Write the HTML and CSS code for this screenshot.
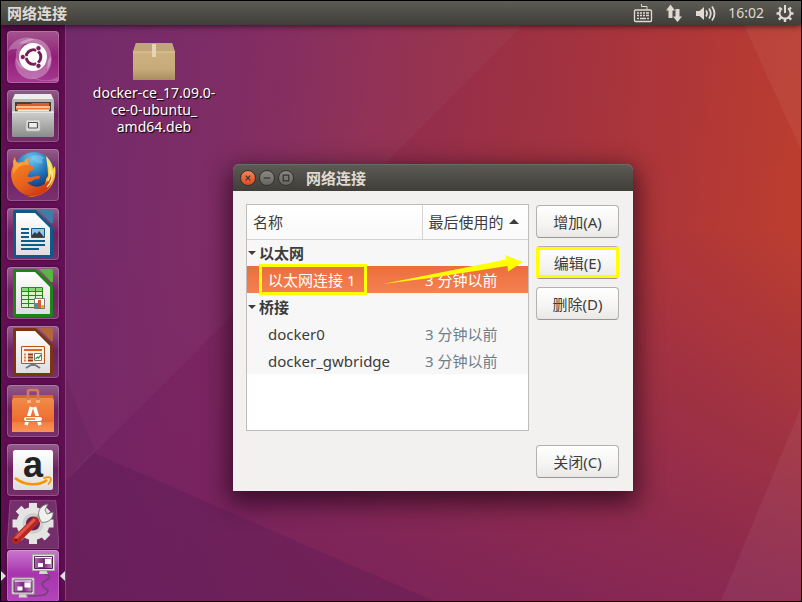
FILE: index.html
```html
<!DOCTYPE html>
<html lang="zh-CN">
<head>
<meta charset="utf-8">
<title>网络连接</title>
<link rel="stylesheet" href="styles.css">
</head>
<body>
<div class="screen">
  <header class="panel">
    <span class="panel-title">网络连接</span>
    <div class="indicators">
      <button class="indicator" aria-label="键盘">
        <svg width="20" height="20" viewBox="0 0 20 20" fill="none" stroke="#dfdbd2">
          <path d="M8.500 1v2.500h5.500v3"/>
          <rect x="1.500" y="7" width="17" height="11.500" rx="1" stroke-width="1.300"/>
          <path d="M4 10h2m1 0h2m1 0h2m1 0h3M4 12.500h2m1 0h2m1 0h2m1 0h3M4 15.500h2m1 0h6m1 0h2" stroke-width="1.700"/>
        </svg>
      </button>
      <button class="indicator" aria-label="网络">
        <svg width="20" height="20" viewBox="0 0 20 20" fill="#dfdbd2">
          <path d="M6.500 1.500 11 7.500H8.500V15h-4V7.500H2z"/>
          <path d="M13.500 19 9 13.500h2.500V6h4v7.500H18z"/>
        </svg>
      </button>
      <button class="indicator" aria-label="音量">
        <svg width="22" height="20" viewBox="0 0 22 20" fill="none" stroke="#dfdbd2" stroke-width="1.800">
          <path d="M1 8h3.500L9 4v13l-4.500-4H1z" fill="#dfdbd2" stroke="none"/>
          <path d="M11 7.500q2 3 0 6M14 5.500q3.500 5 0 10M17 3.500q5 7 0 14"/>
        </svg>
      </button>
      <button class="indicator clock">16:02</button>
      <button class="indicator" aria-label="系统">
        <svg width="20" height="20" viewBox="0 0 20 20" fill="none" stroke="#dfdbd2">
          <path d="M7 5.500a5.500 5.500 0 1 0 6 0" stroke-width="2"/>
          <path d="M10 2v8" stroke-width="2"/>
          <path d="M10 16v3M4.500 10.500h-3M18.500 10.500h-3M6 14.500l-2.200 2.200M14 14.500l2.200 2.200M5.500 6 4 4.500M14.500 6 16 4.500" stroke-width="2.400"/>
        </svg>
      </button>
    </div>
  </header>

  <div class="workspace">
    <svg class="wallpaper" viewBox="65 25 736 576" preserveAspectRatio="none" aria-hidden="true">
      <path d="M65 25H523L384 165 230 318 65 482z" fill="#fff" opacity=".03"/>
      <path d="M65 375 94 449 65 482z" fill="#501a48" opacity=".15"/>
      <path d="M65 482 94 453 434 601H65z" fill="#4e1a50" opacity=".28"/>
      <path d="M744 25H801V150z" fill="#fff" opacity=".05"/>
      <path d="M801 407V601H721z" fill="#fff" opacity=".05"/>
    </svg>

    <nav class="launcher" aria-label="启动器">
      <a class="tile tile-dash" href="#" aria-label="搜索">
        <svg viewBox="0 0 52 52">
          <g fill="#fff">
            <path d="M12 13C20 5 37 5 43 19c3 9 1 15-3 20 4-16-8-29-28-26z" opacity=".32"/>
            <path d="M44 25c3 13-8 25-22 23C12 46 6 36 9 26c5 14 22 19 35-1z" opacity=".3"/>
            <path d="M1 20C5 8 20 3 28 9 12 10 9 24 17 39 8 34 8 25 10 18c-3 0-6 0-9 2z" opacity=".25"/>
            <path d="M24 45c10 6 20 5 27 1v4H38c-6 0-11-2-14-5z" opacity=".2"/>
          </g>
          <circle cx="26" cy="26" r="14" fill="#fff"/>
          <circle cx="26.500" cy="26" r="7.300" fill="none" stroke="#761e56" stroke-width="3"/>
          <path d="M26.500 26H15M26.500 26l6-10M26.500 26l6 10" stroke="#fff" stroke-width="1.600"/>
          <circle cx="26.500" cy="26" r="5.600" fill="#fff"/>
          <g fill="#761e56" stroke="#fff" stroke-width=".8"><circle cx="15.800" cy="26" r="2.600"/><circle cx="31.500" cy="17.200" r="2.600"/><circle cx="31.500" cy="34.800" r="2.600"/></g>
        </svg>
      </a>
      <a class="tile" href="#" aria-label="文件">
        <svg viewBox="0 0 52 52">
          <defs><linearGradient id="steel" x2="0" y2="1"><stop stop-color="#d0d0ce"/><stop offset="1" stop-color="#8c8c8a"/></linearGradient></defs>
          <path d="M8 4h36l3 6v34H5V10z" fill="#b9b9b6"/>
          <path d="M8 4h36l2 5H6z" fill="#ededeb"/>
          <path d="M8 12h36v10H8z" fill="#45403b"/>
          <path d="M10 14h14l1-1h17v9H10z" fill="#d9602c"/>
          <path d="M9 16h34v2H9z" fill="#f8c08c"/><path d="M9 18h34v2H9z" fill="#ef7a35"/><path d="M11 19.500h31v1.500H11z" fill="#f6e6d6"/>
          <path d="M5 21.500h42V46l-1 1H6l-1-1z" fill="url(#steel)"/>
          <path d="M5 21.500h42v1.200H5z" fill="#ecece9"/>
          <rect x="19" y="30" width="14" height="11" rx="1.500" fill="#dededc" stroke="#b9b9b7" stroke-width=".7"/>
          <rect x="21.500" y="32.500" width="9" height="5.500" rx=".8" fill="#eee" stroke="#50504e" stroke-width="1.200"/>
        </svg>
      </a>
      <a class="tile" href="#" aria-label="Firefox">
        <svg viewBox="0 0 52 52">
          <defs>
            <radialGradient id="globe" cx=".45" cy=".18" r=".8"><stop stop-color="#6fc7ee"/><stop offset=".5" stop-color="#2474b8"/><stop offset="1" stop-color="#132d66"/></radialGradient>
            <linearGradient id="fox" x1=".1" y1="0" x2=".75" y2="1"><stop stop-color="#f58a22"/><stop offset=".6" stop-color="#e8601e"/><stop offset="1" stop-color="#c93314"/></linearGradient>
            <linearGradient id="tail" x2="0" y2="1"><stop stop-color="#fdf07a"/><stop offset=".5" stop-color="#f9c52b"/><stop offset="1" stop-color="#e8601e"/></linearGradient>
          </defs>
          <circle cx="27" cy="23" r="20" fill="url(#globe)"/>
          <path d="M24 8c5-3 12-2 14 2-3-1-4 1-2 4-5 2-9-3-12-6z" fill="#8fd5f2" opacity=".45"/>
          <path d="M39 7c4 4 7 9 7 13l2-3c2 11-2 21-10 26-8 6-18 5-18 5 13-3 19-11 19-18l2-3c0-7-1-13-2-20z" fill="url(#tail)"/>
          <path d="M8 8c0 3 1 5 3 6 2-1 5-1 6-1 1-2 3-4 5-4-1 3-1 5 0 7l5 2c1 2-2 3-5 5 0 3-2 4-2 4 5 3 8-1 12 0 2 1 1 3-2 3-4 0-5 4-10 3 5 6 13 6 19 1 3-3 4-7 4-11 3 5 2 13-3 18C32 49 18 49 10 40 3 33 3 22 6 17c0-3 0-6 2-9z" fill="url(#fox)"/>
          <path d="M8 8c0 3 1 5 3 6 2-1 5-1 6-1 1-2 3-4 5-4-1 3-1 5 0 7-6-1-12 1-16 10 0-4 0-7 1-9-1-3-1-6 1-9z" fill="#f7a03a"/>
          <path d="M42 15c2 6 2 12-1 17M45 22c1 6-1 12-5 16" fill="none" stroke="#fff2a0" stroke-width="1.300"/>
        </svg>
      </a>
      <a class="tile" href="#" aria-label="LibreOffice Writer">
        <svg viewBox="0 0 52 52">
          <defs><linearGradient id="paper" x2="0" y2="1"><stop stop-color="#fff"/><stop offset="1" stop-color="#dedede"/></linearGradient></defs>
          <path d="M8 2h21l17 17v29q0 2-2 2H8q-2 0-2-2V4q0-2 2-2z" fill="#0f5b86"/>
          <path d="M32 2h12q2 0 2 2v11h-2z" fill="#3d7ea9"/>
          <path d="M9 5h19l15 15v27H9z" fill="url(#paper)"/>
          <path d="M14 21h8M14 25h8M14 29h8M14 33h24M14 37h24M14 41h18" stroke="#115d88" stroke-width="2"/>
          <path d="M24.500 20.500h13v9h-13z" fill="#8bc7ea" stroke="#115d88"/>
          <path d="M25 29v-2l3-3 2 2 2-3 5 6z" fill="#363b3f"/><circle cx="35.500" cy="22.500" r="1.300" fill="#f4c63c"/>
        </svg>
      </a>
      <a class="tile" href="#" aria-label="LibreOffice Calc">
        <svg viewBox="0 0 52 52">
          <path d="M8 2h21l17 17v29q0 2-2 2H8q-2 0-2-2V4q0-2 2-2z" fill="#1d8511"/>
          <path d="M32 2h12q2 0 2 2v11h-2z" fill="#57b83f"/>
          <path d="M9 5h19l15 15v27H9z" fill="url(#paper)"/>
          <path d="M14.500 20.500h21v20h-21z" fill="#d9f5cd"/><path d="M15 21h20v3H15z" fill="#8cd878"/>
          <path d="M14.500 20.500h21v20h-21zM14.500 24.500h21M14.500 28.500h21M14.500 32.500h21M14.500 36.500h21M21.500 20.500v20M28.500 20.500v20" fill="none" stroke="#238b16"/>
          <path d="M27.500 31.500h10v10h-10z" fill="#fff" stroke="#777"/>
          <path d="M28 36h3v5h-3z" fill="#2f93d5"/><path d="M31 33h3v8h-3z" fill="#dc5b23"/><path d="M34 38h3v3h-3z" fill="#e8b220"/>
        </svg>
      </a>
      <a class="tile" href="#" aria-label="LibreOffice Impress">
        <svg viewBox="0 0 52 52">
          <path d="M8 2h21l17 17v29q0 2-2 2H8q-2 0-2-2V4q0-2 2-2z" fill="#7d3410"/>
          <path d="M32 2h12q2 0 2 2v11h-2z" fill="#b3663c"/>
          <path d="M9 5h19l15 15v27H9z" fill="url(#paper)"/>
          <path d="M19 42l5-3h4l5 3" fill="none" stroke="#777" stroke-width="2"/>
          <path d="M14.500 20.500h23v17h-23z" fill="#fff0e4" stroke="#b9531c"/>
          <path d="M17 24h18" stroke="#d96a24" stroke-width="2"/>
          <path d="M17 28.500h2M17 31.500h2M17 34.500h2" stroke="#dd8048" stroke-width="2"/>
          <path d="M21 28.500h5M21 31.500h5M21 34.500h5" stroke="#8f3a10" stroke-width="2"/>
          <path d="M27.500 27.500h7v7h-7z" fill="#fff" stroke="#777"/><path d="M28.500 33l2-2 1 1 2.500-3" fill="none" stroke="#289a35" stroke-width="1.200"/>
        </svg>
      </a>
      <a class="tile" href="#" aria-label="软件中心">
        <svg viewBox="0 0 52 52">
          <defs><linearGradient id="bag" x2="0" y2="1"><stop stop-color="#f08b49"/><stop offset=".7" stop-color="#ee6c2e"/><stop offset="1" stop-color="#f58d52"/></linearGradient></defs>
          <path d="M6 10h40l1 5H5z" fill="#d9642e"/>
          <path d="M5 15l2-2h38l2 2v32H5z" fill="url(#bag)"/>
          <path d="M21 17V7q0-2 2-2h6q2 0 2 2v10" fill="none" stroke="#d77958" stroke-width="2.600"/>
          <path d="M20 15h4v3h-4zM29 15h4v3h-4z" fill="#ffb17f"/>
          <path d="M5 37h42v10H5z" fill="#ffa164" opacity=".35"/>
          <g stroke="#fff" stroke-width="3.600"><line x1="24.500" y1="22" x2="19" y2="40"/><line x1="27.500" y1="22" x2="33" y2="40"/></g>
          <rect x="16" y="31" width="20" height="6" fill="#ee6c2e"/>
          <rect x="17" y="32" width="18" height="4" rx="2" fill="#fff"/><path d="M19 34h9" stroke="#ee6c2e" stroke-width="1.500"/>
        </svg>
      </a>
      <a class="tile" href="#" aria-label="Amazon">
        <svg viewBox="0 0 52 52">
          <rect x="6" y="6" width="40" height="40" rx="2.500" fill="url(#paper)"/>
          <text class="amazon-letter" x="26" y="33" text-anchor="middle">a</text>
          <path d="M8 34c10 8 24 8 32 2" fill="none" stroke="#f79400" stroke-width="2.600"/>
          <path d="M36.500 34.500c3-1.500 6-1.500 7-.5s0 4-2.500 6.500" fill="none" stroke="#f79400" stroke-width="1.700"/>
        </svg>
      </a>
      <a class="tile tile-folded" href="#" aria-label="系统设置">
        <svg viewBox="0 0 52 49">
          <path class="folded-plate" d="M3 1q0-1 2-1h42q2 0 2 2l3 45q0 2-2 2H1q-2 0-1-2z"/>
          <path d="M22 3h8v41h-8zM5.500 19.500h41v8h-41zM8.700 11.500l5.700-5.700 29 29-5.700 5.700zM37.700 5.800l5.700 5.700-29 29-5.700-5.700z" fill="#e4e4e2"/>
          <circle cx="26" cy="23.500" r="16.500" fill="#e4e4e2"/>
          <circle cx="26" cy="23.500" r="10.500" fill="#cfcfcd"/>
          <circle cx="26" cy="23.500" r="7" fill="#66205a"/>
          <path d="M25 25 36 14" stroke="#a9aba9" stroke-width="6"/>
          <path d="M32 17c-2-6 2-12 9-13l-3 6 2 4 6-2c1 6-5 12-12 10z" fill="#f0f0ee" stroke="#777" stroke-width=".9"/>
          <path d="M9 40 28 21" stroke="#b82722" stroke-width="8" stroke-linecap="round"/>
          <path d="M9 38 27 20" stroke="#e2564c" stroke-width="3" stroke-linecap="round"/>
          <circle cx="9" cy="40" r="1.600" fill="#7b1713"/>
        </svg>
      </a>
      <a class="tile tile-active" href="#" aria-label="网络连接" aria-current="true">
        <svg viewBox="0 0 52 52">
          <defs><linearGradient id="screenfill" x2="1"><stop stop-color="#b269b6"/><stop offset=".5" stop-color="#7a2779"/><stop offset="1" stop-color="#c08cc4"/></linearGradient></defs>
          <path d="M36 23c9 3 8 5 2 8s-1 7 3 9c0 6-8 6-20 6" fill="none" stroke="#74417a" stroke-width="1.600"/>
          <g id="monitor">
            <path d="M33 20h6l2 4h-9z" fill="#d5d5cf"/>
            <path d="M25.500 4.500h22v16h-22z" fill="#e5e5df" stroke="#aaa9a2"/>
            <path d="M27.500 6.500h18v12h-18z" fill="url(#screenfill)" stroke="#56205a"/>
            <path d="M28 7.500h17" stroke="#fff" stroke-width="1.200"/>
            <path d="M38 9h6v5h-6zM31 13h5v4h-5z" fill="#fff"/>
          </g>
          <use href="#monitor" x="-20.500" y="23.500"/>
        </svg>
      </a>
    </nav>

    <main class="desktop">
      <a class="desktop-file" href="#">
        <svg width="44" height="40" viewBox="0 0 44 40" aria-hidden="true">
          <defs><linearGradient id="box" x2="0" y2="1"><stop stop-color="#d1b384"/><stop offset=".7" stop-color="#c8ab7a"/><stop offset="1" stop-color="#a98d60"/></linearGradient></defs>
          <path d="M4 2h36l3 9v28H1V11z" fill="url(#box)"/>
          <path d="M4 2h36l3 9H1z" fill="#c3a57a"/><path d="M1 11h42" stroke="#dfc69c"/>
          <path d="M20 3h4v13h-4z" fill="#e5d3b5"/>
        </svg>
        <span>docker-ce_17.09.0-<br>ce-0-ubuntu_<br>amd64.deb</span>
      </a>

      <section class="window" aria-labelledby="window-title">
        <header class="titlebar">
          <button class="control control-close" aria-label="关闭窗口"><svg viewBox="0 0 15 15"><path d="M5 5l5 5M10 5l-5 5"/></svg></button>
          <button class="control" aria-label="最小化"><svg viewBox="0 0 15 15"><path d="M4 7.500h7"/></svg></button>
          <button class="control" aria-label="最大化"><svg viewBox="0 0 15 15"><path d="M4.500 4.500h6v6h-6z"/></svg></button>
          <h1 id="window-title">网络连接</h1>
        </header>
        <div class="window-body">
          <div class="list">
            <table>
              <thead><tr><th class="name-column">名称</th><th>最后使用的<i class="sort-arrow"></i></th></tr></thead>
              <tbody>
                <tr class="group"><td colspan="2"><i class="expander"></i>以太网</td></tr>
                <tr class="selected"><td>以太网连接 1</td><td>3 分钟以前</td></tr>
                <tr class="group"><td colspan="2"><i class="expander"></i>桥接</td></tr>
                <tr><td>docker0</td><td>3 分钟以前</td></tr>
                <tr><td>docker_gwbridge</td><td>3 分钟以前</td></tr>
              </tbody>
            </table>
          </div>
          <div class="actions">
            <button class="button">增加(A)</button>
            <button class="button">编辑(E)</button>
            <button class="button">删除(D)</button>
          </div>
          <footer class="window-footer"><button class="button">关闭(C)</button></footer>
        </div>
        <svg class="annotations" viewBox="233 164 400 327" aria-hidden="true">
          <g fill="none" stroke="#ff0" stroke-width="3"><path d="M260.500 265.500h105v28h-105zM537.500 248.500h80v28h-80z"/></g>
          <path d="M383 284 506 259.500 505 255 523 262 508 271.500 507.500 266 430 278z" fill="#ff0"/>
        </svg>
      </section>
    </main>
  </div>
</div>
</body>
</html>
```
FILE: styles.css
```css
* {
  box-sizing: border-box;
}

body {
  margin: 0;
  font: 15px/20px "Noto Sans", "Noto Sans CJK SC", sans-serif;
  color: #3c3c3c;
}

button {
  font: inherit;
  color: inherit;
}

.screen {
  display: flex;
  flex-direction: column;
  height: 100vh;
  border: 1px solid #000;
  overflow: hidden;
}

/* Top panel */

.panel {
  position: relative;
  z-index: 2;
  display: flex;
  flex: none;
  align-items: center;
  justify-content: space-between;
  height: 24px;
  padding: 0 6px;
  color: #dfdbd2;
  background: linear-gradient(#5c5b54, #3f3e39);
  box-shadow: 0 1px 6px rgba(0, 0, 0, .65);
}

.panel-title {
  font-weight: 700;
}

.indicators {
  display: flex;
  align-items: center;
  gap: 11px;
}

.indicator {
  display: flex;
  padding: 0;
  border: 0;
  background: none;
}

.clock {
  font-size: 14px;
}

/* Desktop background */

.workspace {
  position: relative;
  display: flex;
  flex: 1;
  min-height: 0;
  background:
    linear-gradient(to top, rgba(116, 32, 96, .7), rgba(116, 32, 96, 0) 65%),
    linear-gradient(96deg, #6e2468 8%, #7c2760 28%, #8f2c50 45%, #9e3142 62%, #b33836 84%, #c0402b);
}

.wallpaper {
  position: absolute;
  inset: 0 0 0 64px;
  width: calc(100% - 64px);
  height: 100%;
}

/* Launcher */

.launcher {
  position: relative;
  display: flex;
  flex: none;
  flex-direction: column;
  gap: 7px;
  width: 65px;
  padding: 6px;
  background: linear-gradient(#5b0b4c, #650f57 30%, #5d0c50);
  border-right: 1px solid #8b3f80;
}

.tile {
  position: relative;
  flex: none;
  width: 52px;
  height: 52px;
  border-radius: 4px;
  background: linear-gradient(rgba(255, 255, 255, .32), rgba(255, 255, 255, .08) 48%, rgba(255, 255, 255, .14));
  box-shadow: inset 0 0 0 1px rgba(255, 255, 255, .2), 0 0 3px rgba(30, 0, 25, .5);
}

.tile svg {
  display: block;
  width: 100%;
  height: 100%;
}

.tile-dash {
  background: linear-gradient(#a3568f, #931d78 50%, #a53a91);
}

.tile-folded {
  height: 49px;
  margin-top: -3px;
  background: none;
  box-shadow: none;
}

.folded-plate {
  fill: rgba(255, 255, 255, .14);
  stroke: rgba(255, 255, 255, .2);
}

.tile-active {
  margin-top: -6px;
  background: linear-gradient(#c978cf, #a835ae 45%, #b344ba);
}

.tile-active::before,
.tile-active::after {
  content: "";
  position: absolute;
  top: 21px;
  border: 5px solid transparent;
}

.tile-active::before {
  left: -6px;
  border-left-color: #e2dce0;
  border-right: 0;
}

.tile-active::after {
  right: -6px;
  border-right-color: #e2dce0;
  border-left: 0;
}

.amazon-letter {
  font: 700 36px "Liberation Sans", sans-serif;
  fill: #222;
}

/* Desktop items */

.desktop {
  position: relative;
  flex: 1;
}

.desktop-file {
  position: absolute;
  top: 16px;
  left: 18px;
  display: flex;
  flex-direction: column;
  align-items: center;
  gap: 3px;
  width: 140px;
  color: #fff;
  font-size: 14px;
  line-height: 17px;
  text-align: center;
  text-decoration: none;
  text-shadow: 1px 1px 1px #000;
}

.window {
  position: absolute;
  top: 139px;
  left: 167px;
  width: 400px;
  border-radius: 7px 7px 0 0;
  background: #f2f1f0;
  box-shadow: 0 8px 24px 4px rgba(20, 0, 15, .65);
}

.titlebar {
  display: flex;
  align-items: center;
  gap: 3px;
  height: 27px;
  padding: 0 7px;
  border-radius: 6px 6px 0 0;
  color: #dfdbd2;
  background: linear-gradient(#5c5b54, #3f3e39);
  box-shadow: inset 0 1px #6c6b64;
}

.titlebar h1 {
  margin: 0 0 0 9px;
  font-size: 15px;
  line-height: 20px;
}

.control {
  width: 16px;
  height: 16px;
  padding: 0;
  border: 1px solid #33322e;
  border-radius: 50%;
  background: linear-gradient(#8b8981, #66655f);
}

.control svg {
  display: block;
  fill: none;
  stroke: #34332e;
  stroke-width: 1.3;
}

.control-close {
  background: linear-gradient(#f5835d, #df4b1c);
}

.window-body {
  display: grid;
  grid-template-columns: 1fr 83px;
  gap: 14px 7px;
  padding: 13px 14px 13px 13px;
}

.list {
  min-height: 227px;
  border: 1px solid #bfbdba;
  background: #fff;
}

table {
  width: 100%;
  border-collapse: collapse;
  table-layout: fixed;
}

th {
  height: 34px;
  padding: 0 6px;
  border-bottom: 1px solid #d5d4d2;
  background: linear-gradient(#fff, #f9f9f9);
  font-weight: 400;
  text-align: left;
  white-space: nowrap;
}

.name-column {
  width: 175px;
  border-right: 1px solid #d5d4d2;
}

.sort-arrow {
  display: inline-block;
  margin: 0 0 4px 5px;
  border: 5px solid transparent;
  border-top: 0;
  border-bottom-color: #3c3c3c;
}

td {
  height: 27px;
  padding: 0 3px;
  background: #f7f7f7;
  color: #6f7d8a;
  white-space: nowrap;
}

td:first-child {
  padding-left: 21px;
  color: #3c3c3c;
}

.group td:first-child {
  padding-left: 1px;
  font-weight: 700;
}

.selected td,
.selected td:first-child {
  background: linear-gradient(#eb6e3d, #f58052);
  color: #fff;
}

.expander {
  display: inline-block;
  margin: 0 3px 4px 0;
  border: 4px solid transparent;
  border-bottom: 0;
  border-top-color: #3c3c3c;
}

.actions {
  display: flex;
  flex-direction: column;
  gap: 8px;
  padding-top: 1px;
}

.button {
  width: 83px;
  height: 33px;
  padding: 0;
  border: 1px solid #b4b2ae;
  border-bottom-color: #989692;
  border-radius: 4px;
  background: linear-gradient(#fff, #f5f4f3 60%, #e9e8e6);
}

.window-footer {
  display: flex;
  grid-column: 1 / -1;
  justify-content: flex-end;
}

.annotations {
  position: absolute;
  inset: 0;
  width: 100%;
  height: 100%;
  pointer-events: none;
}
```
